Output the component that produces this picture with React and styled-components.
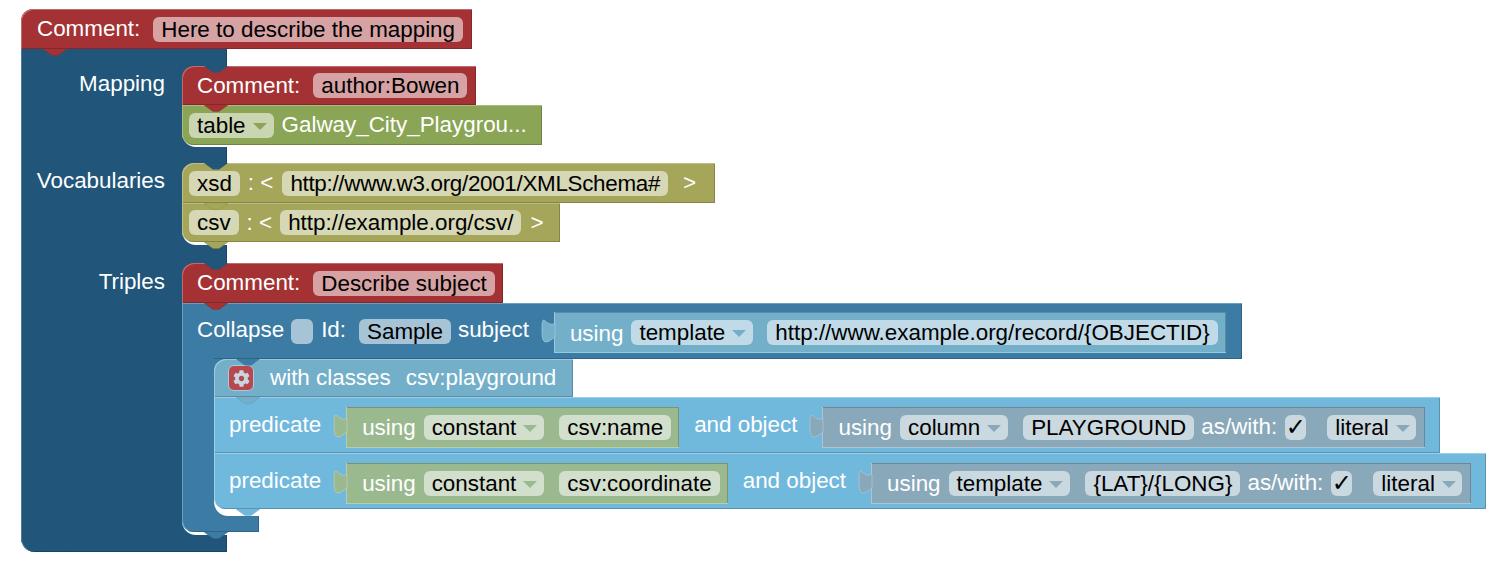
import React from "react";
import styled, { createGlobalStyle } from "styled-components";
import { FaCog } from "react-icons/fa";

const P = {
  root: { base: "#215579", light: "#4d7c9c", dark: "#1a4461" },
  subject: { base: "#3c7ca4", light: "#68a0c2", dark: "#306384" },
  classes: { base: "#74afca", light: "#9cc8dc", dark: "#5d8ca2" },
  predicate: { base: "#71b8dd", light: "#9ccfe9", dark: "#5a93b1" },
  comment: { base: "#a43235", light: "#bf6a6c", dark: "#83282a" },
  table: { base: "#89a555", light: "#a8bd82", dark: "#6e8444" },
  vocab: { base: "#a5a65a", light: "#bdbe86", dark: "#848548" },
  sage: { base: "#9bb98f", light: "#b7ceae", dark: "#7c9472" },
  slate: { base: "#89a8ba", light: "#aec4d1", dark: "#6e8695" },
};

const Global = createGlobalStyle`
  html, body { margin: 0; background: #fff; }
  * { box-sizing: border-box; }
  #root { font-family: "Liberation Sans", Arial, sans-serif; font-size: 22.4px; }
`;

const Workspace = styled.div`
  display: flex;
  flex-direction: column;
  align-items: flex-start;
  width: fit-content;
  padding: 9px 0 0 21px;
`;

const Stack = styled.div`
  display: flex;
  flex-direction: column;
  align-items: flex-start;
  width: fit-content;
`;

const Block = styled.div`
  --tone: ${(p) => p.$c.base};
  position: relative;
  display: flex;
  align-items: center;
  height: ${(p) => p.$h || 40}px;
  width: fit-content;
  padding: 0 ${(p) => p.$pr ?? 9}px 0 ${(p) => p.$pl ?? 16}px;
  color: #fff;
  white-space: nowrap;
  background: ${(p) => p.$c.base};
  border-radius: ${(p) => (p.$top ? 12 : 0)}px 0 0 ${(p) => p.$bottom || 0}px;
  box-shadow: inset 1px 1px 0 ${(p) => p.$c.light}, inset -1px -1px 0 ${(p) => p.$c.dark};
`;

const Stub = styled.div`
  position: relative;
  height: ${(p) => p.$h}px;
  width: ${(p) => p.$w}px;
  background: ${(p) => p.$c.base};
  border-radius: 0 0 0 ${(p) => p.$bottom || 0}px;
  box-shadow: inset 1px 0 0 ${(p) => p.$c.light}, inset -1px ${(p) => (p.$bottom ? -1 : 0)}px 0 ${(p) => p.$c.dark};
`;

const InputRow = styled.div`
  display: flex;
  align-items: stretch;
  background: ${(p) => p.$c};
`;

const Column = styled.div`
  position: relative;
  width: ${(p) => p.$w}px;
  flex: none;
  margin-top: ${(p) => (p.$lap ? -1 : 0)}px;
  padding: ${(p) => p.$top || 0}px 17px 0 0;
  text-align: right;
  color: #fff;
  line-height: 36px;
  background: inherit;
  box-shadow: inset 1px 0 0 ${(p) => p.$light};
`;

const Slot = styled.div`
  position: relative;
  flex: 1;
  display: flex;
  flex-direction: column;
  align-items: flex-start;
  padding-bottom: ${(p) => p.$gap}px;
  background: #fff;
  border-bottom-left-radius: 14px;
  &::before {
    content: "";
    position: absolute;
    top: 0;
    left: 0;
    width: 14px;
    height: 14px;
    background: ${(p) => p.$parent};
  }
`;

const Label = styled.span`
  flex: none;
  margin-left: ${(p) => p.$ml || 0}px;
  margin-bottom: ${(p) => p.$raise || 0}px;
  margin-top: ${(p) => p.$drop || 0}px;
  color: #fff;
  line-height: 26px;
`;

const Field = styled.span`
  flex: none;
  display: flex;
  align-items: center;
  height: 25px;
  margin-left: ${(p) => p.$ml || 0}px;
  padding: 0 ${(p) => p.$pr ?? 8}px 0 8px;
  border-radius: 6px;
  color: #000;
  background: rgba(255, 255, 255, 0.55);
  line-height: 25px;
  letter-spacing: ${(p) => p.$track || 0}px;
`;

const Arrow = styled.i`
  width: 0;
  height: 0;
  margin-left: 7px;
  margin-top: 2px;
  border-left: 7px solid transparent;
  border-right: 7px solid transparent;
  border-top: 7px solid var(--tone);
`;

const Toggle = styled.span`
  flex: none;
  display: flex;
  align-items: center;
  justify-content: center;
  width: ${(p) => p.$w || 22}px;
  height: 25px;
  margin-left: ${(p) => p.$ml || 0}px;
  border-radius: 6px;
  background: rgba(255, 255, 255, 0.55);
  color: #000;
  font: bold 24px "DejaVu Sans", sans-serif;
  line-height: 25px;
`;

const Value = styled(Block)`
  flex: none;
  margin-left: ${(p) => p.$ml || 0}px;
  margin-top: ${(p) => p.$mt ?? 4}px;
  height: 41px;
  box-shadow: inset 1px -1px 0 ${(p) => p.$c.light}, inset -1px 1px 0 ${(p) => p.$c.dark};
`;

const TabShape = styled.svg`
  position: absolute;
  left: -12px;
  top: 8px;
  overflow: visible;
`;

const Dent = styled.svg`
  position: absolute;
  left: 22px;
  z-index: 2;
  overflow: visible;
  ${(p) => (p.$edge === "top" ? "top: 0;" : "bottom: -7px;")}
`;

const GearBox = styled.span`
  flex: none;
  display: flex;
  align-items: center;
  justify-content: center;
  width: 26px;
  height: 26px;
  border-radius: 6px;
  background: #b9474f;
  border: 1px solid #a9cbdc;
  color: #c7d6df;
  font-size: 17px;
`;

const DENT = "M0 0 L7.5 5.4 Q9 6.6 10.6 6.6 L13.4 6.6 Q15 6.6 16.5 5.4 L24 0";

const Notch = ({ fill }) => (
  <Dent $edge="top" width="24" height="7" viewBox="0 0 24 7">
    <path d={`${DENT} Z`} fill={fill} />
  </Dent>
);

const Tab = ({ c }) => (
  <Dent $edge="bottom" width="24" height="7" viewBox="0 0 24 7">
    <path d={`${DENT} Z`} fill={c.base} />
    <path d={DENT} fill="none" stroke={c.dark} strokeWidth="0.7" strokeOpacity="0.5" />
  </Dent>
);

const Puzzle = ({ c }) => (
  <TabShape width="13" height="23" viewBox="0 0 13 23">
    <path
      d="M13 3 C10 6 5 3 2 0 C0 0 0 4 0 11 C0 18 1 22 4 22 C7 22 10 19 13 17 Z"
      fill={c.base}
      stroke={c.light}
      strokeWidth="0.8"
    />
  </TabShape>
);

const Comment = ({ text, notch, h, pl, pr }) => (
  <Block $c={P.comment} $top $h={h} $pl={pl} $pr={pr}>
    {notch && <Notch fill={notch} />}
    <Label>Comment:</Label>
    <Field $ml={13}>{text}</Field>
    <Tab c={P.comment} />
  </Block>
);

const Select = ({ children, ml, pr = 7 }) => (
  <Field $ml={ml} $pr={pr}>
    {children}
    <Arrow />
  </Field>
);

const ObjectValue = ({ kind, name, ml }) => (
  <Value $c={P.slate} $ml={ml} $pr={9}>
    <Puzzle c={P.slate} />
    <Label $drop={2}>using</Label>
    <Select ml={8}>{kind}</Select>
    <Field $ml={15}>{name}</Field>
    <Label $ml={7}>as/with:</Label>
    <Toggle $ml={8} $w={21}>✓</Toggle>
    <Select ml={21} pr={6}>literal</Select>
  </Value>
);

const ConstantValue = ({ name, ml }) => (
  <Value $c={P.sage} $ml={ml} $pr={8}>
    <Puzzle c={P.sage} />
    <Label $drop={2}>using</Label>
    <Select ml={8}>constant</Select>
    <Field $ml={15}>{name}</Field>
  </Value>
);

const Predicate = ({ name, kind, obj, bottom }) => (
  <Block $c={P.predicate} $h={56} $pl={15} $pr={15} $bottom={bottom ? 12 : 0}>
    <Label>predicate</Label>
    <ConstantValue name={name} ml={25} />
    <Label $ml={15}>and object</Label>
    <ObjectValue kind={kind} name={obj} ml={25} />
    {bottom && <Tab c={P.predicate} />}
  </Block>
);

export default function App() {
  return (
    <Workspace>
      <Global />
      <Comment text="Here to describe the mapping" />
      <Stack>
        <Stub $c={P.root} $h={17} $w={206} />
        <InputRow $c={P.root.base}>
          <Column $w={161} $light={P.root.light}>Mapping</Column>
          <Slot $gap={2} $parent={P.root.base}>
            <Comment text="author:Bowen" notch={P.root.base} h={39} pl={15} pr={9} />
            <Block $c={P.table} $pl={7} $pr={15} $bottom={12}>
              <Select>table</Select>
              <Label $ml={8}>Galway_City_Playgrou...</Label>
            </Block>
          </Slot>
        </InputRow>
        <Stub $c={P.root} $h={16} $w={206} />
        <InputRow $c={P.root.base}>
          <Column $w={161} $light={P.root.light}>Vocabularies</Column>
          <Slot $gap={3} $parent={P.root.base}>
            <Block $c={P.vocab} $pl={7} $pr={19} $top>
              <Notch fill={P.root.base} />
              <Field>xsd</Field>
              <Label $ml={8}>: &lt;</Label>
              <Field $ml={9} $track={-0.3}>http://www.w3.org/2001/XMLSchema#</Field>
              <Label $ml={15}>&gt;</Label>
              <Tab c={P.vocab} />
            </Block>
            <Block $c={P.vocab} $pl={7} $pr={17} $h={39} $bottom={12}>
              <Field>csv</Field>
              <Label $ml={8}>: &lt;</Label>
              <Field $ml={8}>http://example.org/csv/</Field>
              <Label $ml={9}>&gt;</Label>
              <Tab c={P.vocab} />
            </Block>
          </Slot>
        </InputRow>
        <Stub $c={P.root} $h={18} $w={206} />
        <InputRow $c={P.root.base}>
          <Column $w={161} $top={1} $light={P.root.light}>Triples</Column>
          <Slot $gap={3} $parent={P.root.base}>
            <Comment text="Describe subject" notch={P.root.base} pl={15} pr={8} />
            <Stack>
              <Block $c={P.subject} $h={56} $pl={15} $pr={16}>
                <Label $raise={2}>Collapse</Label>
                <Toggle $ml={7} />
                <Label $ml={8} $raise={2}>Id:</Label>
                <Field $ml={13}>Sample</Field>
                <Label $ml={7} $raise={2}>subject</Label>
                <Value $c={P.classes} $ml={25} $mt={3} $pr={8}>
                  <Puzzle c={P.classes} />
                  <Label $drop={2}>using</Label>
                  <Select ml={8}>template</Select>
                  <Field $ml={14}>http://www.example.org/record/{"{OBJECTID}"}</Field>
                </Value>
              </Block>
              <InputRow $c={P.subject.base}>
                <Column $w={32} $lap $light={P.subject.light} />
                <Slot $gap={7} $parent={P.subject.base}>
                  <Block $c={P.classes} $top $h={38} $pl={14} $pr={17}>
                    <Notch fill={P.subject.base} />
                    <GearBox><FaCog /></GearBox>
                    <Label $ml={16}>with classes</Label>
                    <Label $ml={15}>csv:playground</Label>
                    <Tab c={P.classes} />
                  </Block>
                  <Predicate name="csv:name" kind="column" obj="PLAYGROUND" />
                  <Predicate name="csv:coordinate" kind="template" obj="{LAT}/{LONG}" bottom />
                </Slot>
              </InputRow>
              <Stub $c={P.subject} $h={16} $w={77} $bottom={12}>
                <Tab c={P.subject} />
              </Stub>
            </Stack>
          </Slot>
        </InputRow>
        <Stub $c={P.root} $h={17} $w={206} $bottom={14}>
          <Tab c={P.root} />
        </Stub>
      </Stack>
    </Workspace>
  );
}
